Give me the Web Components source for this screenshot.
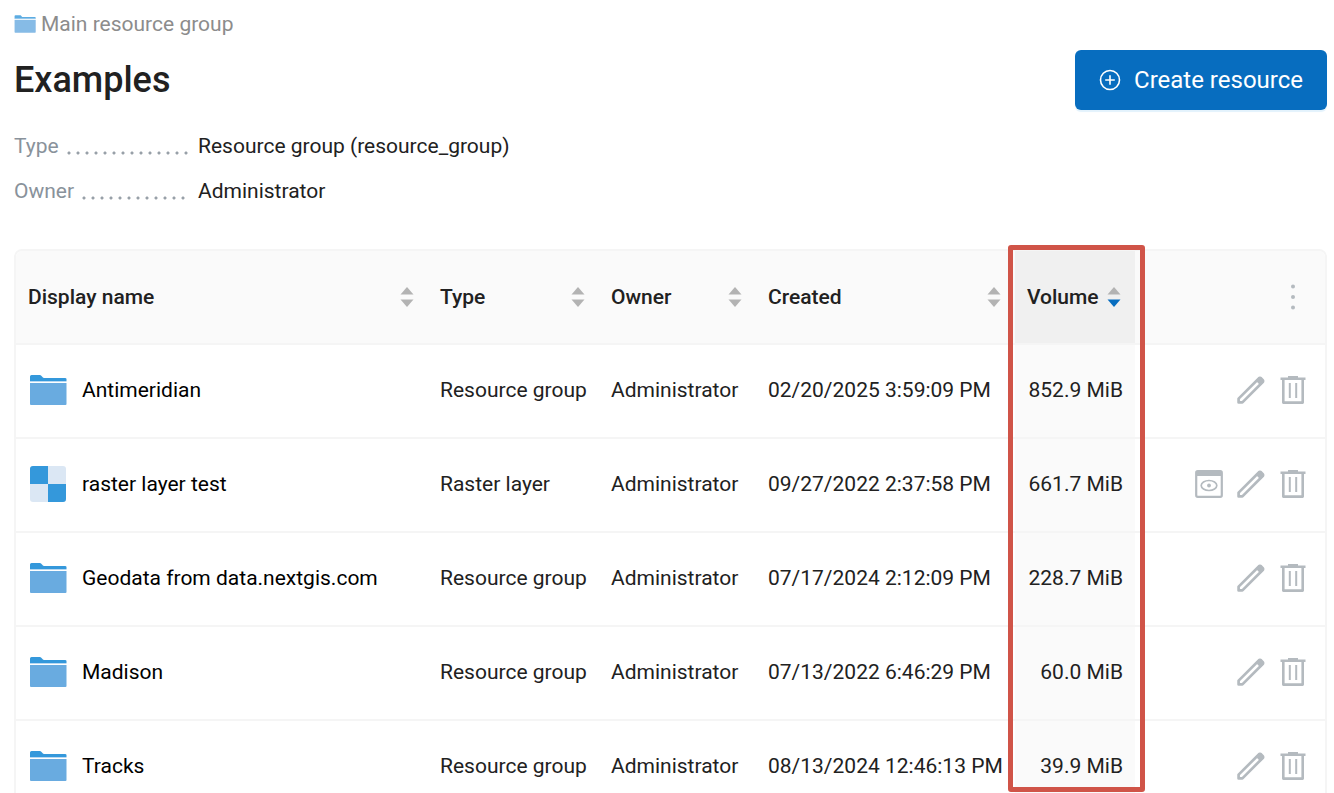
<!DOCTYPE html>
<html lang="en">
<head>
<meta charset="utf-8">
<title>Examples</title>
<style>
  html, body { margin: 0; height: 100%; }
  body { background: #fff; color: #212121; font: 21px/32px Roboto, "Liberation Sans", sans-serif; }
</style>
</head>
<body>
<resource-page>
  <resource-crumb slot="crumb" href="#main">Main resource group</resource-crumb>
  <span slot="title">Examples</span>
  <create-button slot="action">Create resource</create-button>
  <meta-row slot="meta" label="Type">Resource group (resource_group)</meta-row>
  <meta-row slot="meta" label="Owner">Administrator</meta-row>
  <resource-table slot="table"></resource-table>
</resource-page>

<script>
const ICONS = {
  folder: ['0 0 38 32', `<path fill="#3498db" d="M1 7V2.500Q1 1 2.500 1H11Q12 1 13 2.500T15.500 4H36Q37.500 4 37.500 5V7H1Z"/><path fill="#b9d9f2" d="M1 7H37.500V8H1Z"/><path fill="#69abe0" d="M1 9H37.500V30Q37.500 31 36.500 31H2Q1 31 1 30Z"/>`],
  raster: ['0 0 38 38', `<path fill="#dbe7f4" d="M4 1H34Q37 1 37 4V34Q37 37 34 37H4Q1 37 1 34V4Q1 1 4 1Z"/><path fill="#3498db" d="M4 1H19V19H1V4Q1 1 4 1ZM19 19H37V34Q37 37 34 37H19Z"/>`],
  plus: ['0 0 22 22', `<g fill="none" stroke="currentColor" stroke-width="1.600"><circle cx="11" cy="11" r="9.500"/><path d="M11 6.200V15.800M6.200 11H15.800"/></g>`],
  pencil: ['0 0 28 28', `<path fill="none" stroke="currentColor" stroke-width="2.700" stroke-linejoin="round" d="M1.600 26.400V22.600L22.300 2L26 5.700L5.400 26.400Z"/><path fill="currentColor" d="M18.600 4.600L22.300 1Q23.500 0 24.600 1L27 3.400Q28 4.500 27 5.700L23.400 9.400Z"/>`],
  trash: ['0 0 28 28', `<path fill="none" stroke="currentColor" stroke-width="2.600" stroke-linejoin="round" d="M4.300 3V26.600H23.700V3"/><path fill="currentColor" d="M1.500 1.500H9V0H19V1.500H26.500V4H1.500Z"/><path stroke="currentColor" stroke-width="2" d="M10.800 7V22M17.200 7V22"/>`],
  preview: ['0 0 28 28', `<rect x="1.200" y="1.200" width="25.600" height="25.600" rx="1.500" fill="none" stroke="currentColor" stroke-width="2.200"/><path fill="currentColor" d="M1 1H27V6H1Z"/><ellipse cx="14" cy="15.500" rx="7.800" ry="5" fill="none" stroke="currentColor" stroke-width="1.700"/><circle cx="14" cy="15.500" r="1.900" fill="currentColor"/>`],
  sort: ['0 0 14 22', `<path fill="var(--up, #b3b3b3)" d="M7 1L13.500 8.500H.5Z"/><path fill="var(--down, #b3b3b3)" d="M.5 13.500H13.500L7 21Z"/>`],
  dots: ['0 0 4 26', `<g fill="currentColor"><circle cx="2" cy="2.500" r="2"/><circle cx="2" cy="13" r="2"/><circle cx="2" cy="23.500" r="2"/></g>`]
};

customElements.define('ui-icon', class extends HTMLElement {
  constructor() { super(); this.attachShadow({ mode: 'open' }); }
  connectedCallback() {
    const [box, body] = ICONS[this.getAttribute('name')];
    const [, , w, h] = box.split(' ');
    this.shadowRoot.innerHTML = `<style>:host{display:inline-flex;flex:none}svg{display:block;width:var(--w,${w}px);height:var(--h,${h}px)}</style>
      <svg viewBox="${box}" aria-hidden="true">${body}</svg>`;
  }
});

customElements.define('resource-crumb', class extends HTMLElement {
  constructor() {
    super();
    this.attachShadow({ mode: 'open' }).innerHTML = `<style>
      :host{display:block}
      a{display:inline-flex;align-items:center;gap:5px;color:#8c8c8c;text-decoration:none}
      ui-icon{--w:22px;--h:20px;opacity:.8}
    </style><a href="${this.getAttribute('href')}"><ui-icon name="folder"></ui-icon><slot></slot></a>`;
  }
});

customElements.define('create-button', class extends HTMLElement {
  constructor() {
    super();
    this.attachShadow({ mode: 'open' }).innerHTML = `<style>
      :host{display:block}
      button{display:flex;align-items:center;gap:13px;height:60px;padding:0 24px;border:0;border-radius:6px;background:#076dbf;color:#fff;font:24px/32px Roboto,"Liberation Sans",sans-serif;box-shadow:0 2px 1px #e3f2fc;cursor:pointer}
    </style><button type="button"><ui-icon name="plus"></ui-icon><slot></slot></button>`;
  }
});

customElements.define('meta-row', class extends HTMLElement {
  constructor() {
    super();
    this.attachShadow({ mode: 'open' }).innerHTML = `<style>
      :host{display:flex}
      .label{display:flex;gap:8px;width:176px;margin-right:8px;color:#89929b}
      .dots{flex:1;height:4px;margin-top:21px;background:radial-gradient(circle at 2px 2px,#98a0a8 1px,transparent 2px) 0 0/9px 4px repeat-x}
    </style><span class="label">${this.getAttribute('label')}<span class="dots"></span></span><slot></slot>`;
  }
});

customElements.define('resource-table', class extends HTMLElement {
  constructor() {
    super();
    const columns = [['name', 'Display name'], ['type', 'Type'], ['owner', 'Owner'], ['created', 'Created'], ['volume', 'Volume']];
    const rows = [
      ['folder', 'Antimeridian', 'Resource group', '02/20/2025 3:59:09 PM', '852.9 MiB'],
      ['raster', 'raster layer test', 'Raster layer', '09/27/2022 2:37:58 PM', '661.7 MiB'],
      ['folder', 'Geodata from data.nextgis.com', 'Resource group', '07/17/2024 2:12:09 PM', '228.7 MiB'],
      ['folder', 'Madison', 'Resource group', '07/13/2022 6:46:29 PM', '60.0 MiB'],
      ['folder', 'Tracks', 'Resource group', '08/13/2024 12:46:13 PM', '39.9 MiB']
    ];
    const act = (icon, label) => `<button type="button" aria-label="${label}"><ui-icon name="${icon}"></ui-icon></button>`;
    this.attachShadow({ mode: 'open' }).innerHTML = `<style>
      :host{display:block}
      table{width:100%;table-layout:fixed;border:2px solid #f5f5f5;border-radius:8px 8px 0 0;border-spacing:0;overflow:hidden;white-space:nowrap}
      .type{width:171px}.owner{width:157px}.created{width:259px}.volume{width:120px}.tools{width:190px}
      th,td{box-sizing:border-box;height:94px;padding:0 12px;border-bottom:2px solid #f5f5f5;text-align:left}
      th{padding-right:14px;background:#fafafa;font-weight:500}
      td{padding-bottom:2px}
      th.sorted{background:#f0f0f0}
      td.sorted{background:#fafafa;text-align:right}
      .head{display:flex;align-items:center;justify-content:space-between;width:100%;padding:0;border:0;background:none;color:inherit;font:inherit;cursor:pointer}
      .sorted .head{--down:#076dbf}
      .item{display:flex;align-items:center;gap:15px;padding-left:1px}
      a{color:#000;text-decoration:none}
      .actions{display:flex;justify-content:flex-end;gap:14px;padding-right:6px;color:#b4babf}
      .actions button{display:flex;padding:0;border:0;background:none;color:inherit;cursor:pointer}
      .menu{padding-right:16px}
    </style>
    <table>
      <colgroup><col>${columns.slice(1).map(c => `<col class="${c[0]}">`).join('')}<col class="tools"></colgroup>
      <thead><tr>${columns.map(([k, t]) => `<th scope="col"${k === 'volume' ? ' class="sorted" aria-sort="descending"' : ''}><button type="button" class="head">${t}<ui-icon name="sort"></ui-icon></button></th>`).join('')}
        <th><div class="actions menu">${act('dots', 'Table options')}</div></th></tr></thead>
      <tbody>${rows.map(([icon, name, type, created, volume]) => `<tr>
        <td><div class="item"><ui-icon name="${icon}"></ui-icon><a href="#resource">${name}</a></div></td>
        <td>${type}</td><td>Administrator</td><td>${created}</td><td class="sorted">${volume}</td>
        <td><div class="actions">${icon === 'raster' ? act('preview', 'Preview') : ''}${act('pencil', 'Edit')}${act('trash', 'Delete')}</div></td></tr>`).join('')}</tbody>
    </table>`;
  }
});

customElements.define('resource-page', class extends HTMLElement {
  constructor() {
    super();
    this.attachShadow({ mode: 'open' }).innerHTML = `<style>
      :host{display:flex;flex-direction:column;box-sizing:border-box;height:100vh;padding:8px 7px 0 14px;overflow:hidden}
      header{display:flex;align-items:center;justify-content:space-between;margin-top:7px}
      h1{margin:0;font-size:36px;line-height:48px;font-weight:500}
      .meta{display:flex;flex-direction:column;gap:13px;margin:20px 0 42px}
      .listing{position:relative;flex:1;min-height:0}
      .highlight{position:absolute;top:-4px;right:182px;bottom:1px;width:137px;box-sizing:border-box;border:5px solid #d05448;border-radius:3px;pointer-events:none}
    </style>
    <nav><slot name="crumb"></slot></nav>
    <header><h1><slot name="title"></slot></h1><slot name="action"></slot></header>
    <div class="meta"><slot name="meta"></slot></div>
    <div class="listing"><slot name="table"></slot><div class="highlight"></div></div>`;
  }
});
</script>
</body>
</html>
